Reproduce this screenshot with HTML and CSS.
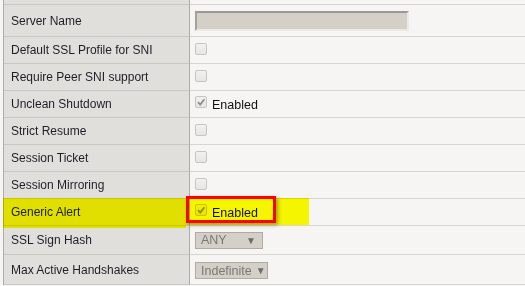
FILE: index.html
```html
<!DOCTYPE html>
<html>
<head>
<meta charset="utf-8">
<link rel="stylesheet" href="styles.css">
</head>
<body>
<div class="tbl">
  <div class="row r-top"><div class="lbl"></div><div class="val"></div></div>
  <div class="row r-first"><div class="lbl">Server Name</div><div class="val"><span class="inp"></span></div></div>
  <div class="row"><div class="lbl">Default SSL Profile for SNI</div><div class="val"><span class="cb"></span></div></div>
  <div class="row"><div class="lbl">Require Peer SNI support</div><div class="val"><span class="cb"></span></div></div>
  <div class="row"><div class="lbl">Unclean Shutdown</div><div class="val"><span class="cb on"><svg viewBox="0 0 10 10" width="10" height="10"><path d="M2 5.2 L4.2 7.6 L8.4 2.2" fill="none" stroke="#8e8e8e" stroke-width="1.8"/></svg></span><span class="txt">Enabled</span></div></div>
  <div class="row"><div class="lbl">Strict Resume</div><div class="val"><span class="cb"></span></div></div>
  <div class="row"><div class="lbl">Session Ticket</div><div class="val"><span class="cb"></span></div></div>
  <div class="row"><div class="lbl">Session Mirroring</div><div class="val"><span class="cb"></span></div></div>
  <div class="row"><div class="lbl">Generic Alert</div><div class="val"><span class="cb on"><svg viewBox="0 0 10 10" width="10" height="10"><path d="M2 5.2 L4.2 7.6 L8.4 2.2" fill="none" stroke="#8e8e8e" stroke-width="1.8"/></svg></span><span class="txt">Enabled</span></div></div>
  <div class="row r-sel1"><div class="lbl">SSL Sign Hash</div><div class="val"><span class="sel sel-any">ANY<span class="arr">&#9660;</span></span></div></div>
  <div class="row r-sel2"><div class="lbl">Max Active Handshakes</div><div class="val"><span class="sel sel-ind">Indefinite<span class="arr">&#9660;</span></span></div></div>
</div>
<div class="hl hl-left"></div>
<div class="hl hl-right"></div>
<div class="redbox"></div>
</body>
</html>
```

FILE: styles.css
```css
html, body {
  margin: 0;
  padding: 0;
}
body {
  background: #f6f5f3;
  font-family: "Liberation Sans", Arial, sans-serif;
  font-size: 12px;
  color: #222;
  width: 525px;
  height: 286px;
  overflow: hidden;
  position: relative;
}
.tbl {
  margin-left: 3px;
  border-left: 1px solid #aeaca9;
}
.row {
  display: grid;
  grid-template-columns: 186px 1fr;
  height: 27px;
}
.lbl {
  background: #e1dfdc;
  border-right: 1px solid #aeaca9;
  border-bottom: 1px solid #c9c7c4;
  padding-left: 7px;
  display: flex;
  align-items: center;
  white-space: nowrap;
  color: #1e1e28;
}
.val {
  background: #f6f5f3;
  border-bottom: 1px solid #d7d5d2;
  padding-left: 5px;
  display: flex;
  align-items: center;
}
.r-top { height: 5px; }
.r-first { height: 32px; }
.r-sel1 { height: 29px; }
.r-sel2 { height: 30px; }
.inp {
  display: block;
  width: 210px;
  height: 16px;
  background: #d4d0c8;
  border-top: 2px solid #999896;
  border-left: 2px solid #a3a19e;
  border-right: 2px solid #ebe9e6;
  border-bottom: 2px solid #ebe9e6;
  margin-top: 1px;
}
.cb {
  display: inline-flex;
  align-items: center;
  justify-content: center;
  box-sizing: border-box;
  width: 12px;
  height: 12px;
  border: 1px solid #c6c5c3;
  border-radius: 2px;
  background: linear-gradient(#f1f1f0, #e6e5e3);
  margin-top: -2px;
}
.cb.on { margin-top: -4px; }
.txt {
  margin-left: 5px;
  color: #111;
  font-size: 12.5px;
  margin-top: 2px;
}
.sel {
  display: inline-flex;
  align-items: center;
  box-sizing: border-box;
  height: 17px;
  background: #d4d0c8;
  border: 1px solid #aeaaa4;
  color: #7a7874;
  font-size: 12.5px;
  padding-left: 5px;
}
.sel-any { width: 68px; margin-top: 0px; }
.sel-ind { width: 73px; margin-top: 2px; padding-left: 5px; }
.arr {
  font-size: 10px;
  color: #6e6c69;
  margin-left: auto;
  margin-right: 6px;
}
.sel-ind .arr { margin-left: 4px; margin-right: 0; }
.hl {
  position: absolute;
  background: #ffff00;
  mix-blend-mode: multiply;
}
.hl-left {
  left: 3px;
  top: 198px;
  width: 183px;
  height: 30px;
}
.hl-right {
  left: 186px;
  top: 198px;
  width: 123px;
  height: 27px;
}
.redbox {
  position: absolute;
  left: 186px;
  top: 196px;
  width: 84px;
  height: 21px;
  border: 3px solid #ff0000;
  box-shadow: 2px 2px 4px rgba(0, 0, 0, 0.35);
}
```
